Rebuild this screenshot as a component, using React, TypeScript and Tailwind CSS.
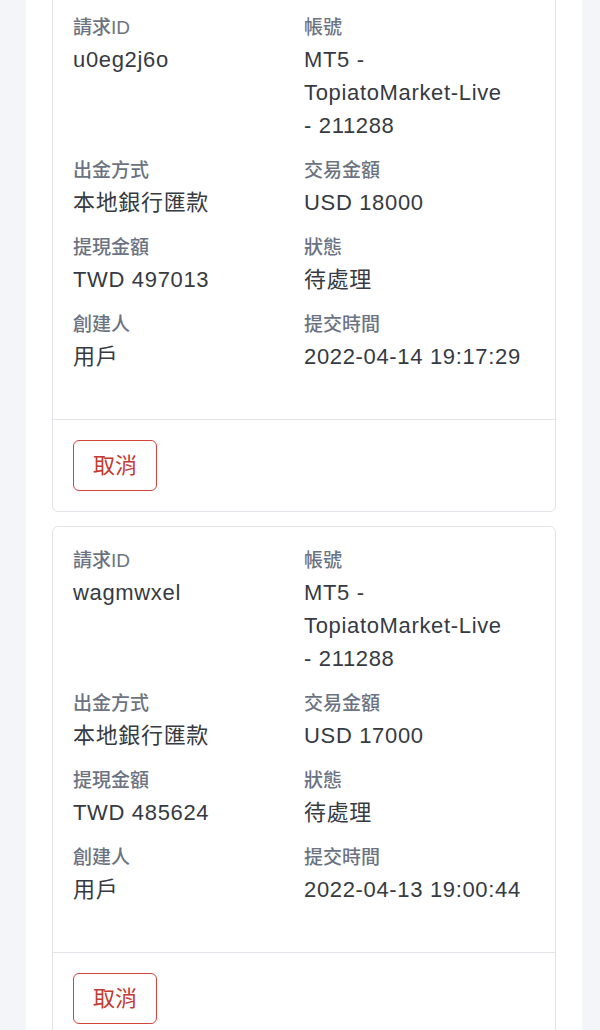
import React from "react";

type Withdrawal = {
  id: string;
  account: string;
  method: string;
  amount: string;
  payout: string;
  status: string;
  creator: string;
  submittedAt: string;
};

const withdrawals: Withdrawal[] = [
  {
    id: "u0eg2j6o",
    account: "211288",
    method: "本地銀行匯款",
    amount: "USD 18000",
    payout: "TWD 497013",
    status: "待處理",
    creator: "用戶",
    submittedAt: "2022-04-14 19:17:29",
  },
  {
    id: "wagmwxel",
    account: "211288",
    method: "本地銀行匯款",
    amount: "USD 17000",
    payout: "TWD 485624",
    status: "待處理",
    creator: "用戶",
    submittedAt: "2022-04-13 19:00:44",
  },
];

const Field = ({ label, children }: { label: string; children: React.ReactNode }) => (
  <div className="flex flex-col">
    <span className="text-[19px] leading-[27px] font-medium text-[#6b7382]">{label}</span>
    <span className="mt-[2px] text-[22px] leading-[33px] tracking-[0.03em] text-[#363a42]">{children}</span>
  </div>
);

const WithdrawalCard = ({ item }: { item: Withdrawal }) => (
  <div className="rounded-md border border-[#e2e4e9] bg-white">
    <div className="grid grid-cols-2 gap-y-[15px] px-5 pt-5 pb-[46px]">
      <Field label="請求ID">{item.id}</Field>
      <Field label="帳號">
        MT5 - <span className="whitespace-nowrap">TopiatoMarket-Live</span>{" "}
        <span className="whitespace-nowrap">- {item.account}</span>
      </Field>
      <Field label="出金方式">{item.method}</Field>
      <Field label="交易金額">{item.amount}</Field>
      <Field label="提現金額">{item.payout}</Field>
      <Field label="狀態">{item.status}</Field>
      <Field label="創建人">{item.creator}</Field>
      <Field label="提交時間">
        <span className="whitespace-nowrap">{item.submittedAt}</span>
      </Field>
    </div>
    <div className="border-t border-[#e2e4e9] px-5 py-5">
      <button className="h-[51px] w-[84px] rounded-md border border-[#d0463d] bg-white text-[22px] text-[#c33a30]">
        取消
      </button>
    </div>
  </div>
);

export default function App() {
  return (
    <div className="min-h-screen bg-[#f4f5f8] font-['Liberation_Sans','Noto_Sans_CJK_TC',sans-serif]">
      <div className="ml-[26px] mr-[18px] min-h-screen bg-white px-[26px]">
        <div className="-mt-[7px] flex flex-col gap-[14px]">
          {withdrawals.map((w) => (
            <WithdrawalCard key={w.id} item={w} />
          ))}
        </div>
      </div>
    </div>
  );
}
